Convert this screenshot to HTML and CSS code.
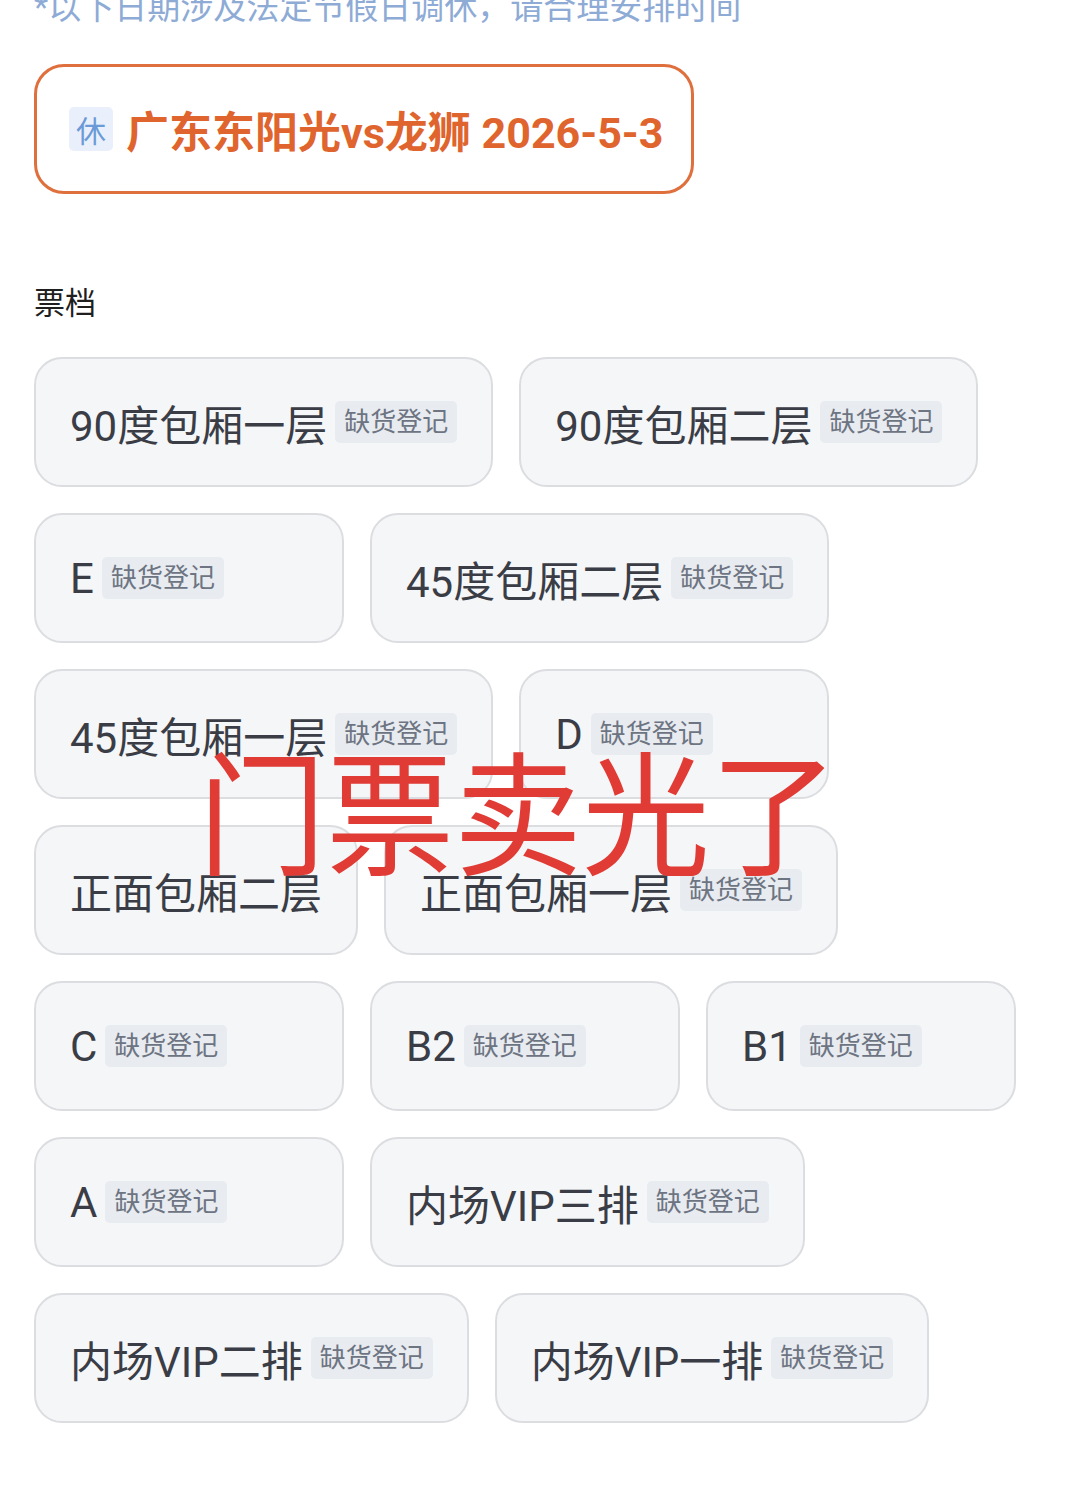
FILE: index.html
```html
<!DOCTYPE html>
<html lang="zh-CN">
  <head>
    <meta charset="UTF-8" />
    <meta name="viewport" content="width=device-width, initial-scale=1.0" />
    <title>票档</title>
    <link rel="stylesheet" href="styles.css">
  </head>
  <body>
    <div class="page">
      <p class="notice">*以下日期涉及法定节假日调休，请合理安排时间</p>
      <div class="date-card">
        <span class="rest-tag">休</span>
        <span class="date-title">广东东阳光vs龙狮 2026-5-3</span>
      </div>

      <h3 class="section-title">票档</h3>
      <div class="tiers">
        <div class="tier"><span class="tier-name">90度包厢一层</span><span class="tag">缺货登记</span></div>
        <div class="tier"><span class="tier-name">90度包厢二层</span><span class="tag">缺货登记</span></div>
        <div class="tier"><span class="tier-name">E</span><span class="tag">缺货登记</span></div>
        <div class="tier"><span class="tier-name">45度包厢二层</span><span class="tag">缺货登记</span></div>
        <div class="tier"><span class="tier-name">45度包厢一层</span><span class="tag">缺货登记</span></div>
        <div class="tier"><span class="tier-name">D</span><span class="tag">缺货登记</span></div>
        <div class="tier"><span class="tier-name">正面包厢二层</span></div>
        <div class="tier"><span class="tier-name">正面包厢一层</span><span class="tag">缺货登记</span></div>
        <div class="tier"><span class="tier-name">C</span><span class="tag">缺货登记</span></div>
        <div class="tier"><span class="tier-name">B2</span><span class="tag">缺货登记</span></div>
        <div class="tier"><span class="tier-name">B1</span><span class="tag">缺货登记</span></div>
        <div class="tier"><span class="tier-name">A</span><span class="tag">缺货登记</span></div>
        <div class="tier"><span class="tier-name">内场VIP三排</span><span class="tag">缺货登记</span></div>
        <div class="tier"><span class="tier-name">内场VIP二排</span><span class="tag">缺货登记</span></div>
        <div class="tier"><span class="tier-name">内场VIP一排</span><span class="tag">缺货登记</span></div>
      </div>

      <div class="sold-out">门票卖光了</div>
    </div>
  </body>
</html>
```

FILE: styles.css
```css
body {
  margin: 0;
  padding: 0;
  background-color: #fff;
  font-family: Roboto, "Noto Sans CJK SC", sans-serif;
  color: #3a3d45;
}
.page {
  position: relative;
  padding: 0 34px;
  height: 1488px;
  overflow: hidden;
}
.notice {
  margin: -12px 0 0;
  font-size: 33px;
  line-height: 40px;
  white-space: nowrap;
  color: #8eabd6;
}
.date-card {
  display: flex;
  align-items: center;
  box-sizing: border-box;
  width: 660px;
  height: 130px;
  margin-top: 36px;
  padding-left: 32px;
  border: 3px solid #df6f3c;
  border-radius: 30px;
}
.rest-tag {
  display: flex;
  align-items: center;
  justify-content: center;
  width: 44px;
  height: 44px;
  border-radius: 5px;
  background-color: #e9f0fb;
  color: #6b9ad8;
  font-size: 30px;
}
.date-title {
  margin-left: 13px;
  font-size: 43px;
  font-weight: bold;
  color: #e0642d;
}
.section-title {
  margin: 90px 0 0;
  font-size: 31px;
  line-height: 40px;
  font-weight: normal;
  color: #1f1f1f;
}
.tiers {
  display: flex;
  flex-wrap: wrap;
  gap: 26px;
  margin-top: 33px;
}
.tier {
  display: flex;
  align-items: center;
  box-sizing: border-box;
  min-width: 310px;
  height: 130px;
  padding: 0 34px;
  border: 2px solid #dcdde0;
  border-radius: 28px;
  background-color: #f5f6f8;
}
.tier-name {
  font-size: 42px;
  color: #3a3d45;
  white-space: nowrap;
}
.tag {
  margin-left: 8px;
  padding: 4px 9px;
  border-radius: 5px;
  background-color: #e8ebf0;
  color: #6d7482;
  font-size: 26px;
  line-height: 34px;
  white-space: nowrap;
}
.sold-out {
  position: absolute;
  left: 198px;
  top: 723px;
  font-size: 128px;
  line-height: 160px;
  color: #e03b34;
  font-family: "Noto Sans CJK SC", sans-serif;
  transform: scaleY(1.05);
  transform-origin: left top;
}
```
